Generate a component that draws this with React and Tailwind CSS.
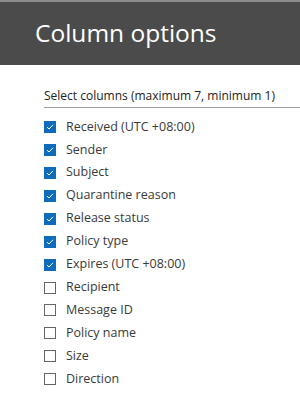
import React, { useState } from 'react';

const columns = [
  { name: 'Received (UTC +08:00)', checked: true },
  { name: 'Sender', checked: true },
  { name: 'Subject', checked: true },
  { name: 'Quarantine reason', checked: true },
  { name: 'Release status', checked: true },
  { name: 'Policy type', checked: true },
  { name: 'Expires (UTC +08:00)', checked: true },
  { name: 'Recipient', checked: false },
  { name: 'Message ID', checked: false },
  { name: 'Policy name', checked: false },
  { name: 'Size', checked: false },
  { name: 'Direction', checked: false },
];

function Checkbox({ checked }) {
  if (checked) {
    return (
      <span className="flex h-[12px] w-[12px] items-center justify-center bg-[#0f6cbd]">
        <svg width="8" height="8" viewBox="0 0 8 8" fill="none">
          <path d="M1 4.2 L3 6 L7 1.8" stroke="white" strokeWidth="1" />
        </svg>
      </span>
    );
  }
  return <span className="h-[12px] w-[12px] border border-[#666]" />;
}

export default function App() {
  const [items, setItems] = useState(columns);

  const toggle = (i) => {
    setItems(items.map((c, idx) => (idx === i ? { ...c, checked: !c.checked } : c)));
  };

  return (
    <div className="h-[400px] w-[300px] bg-white font-['Open_Sans',sans-serif]">
      {/* header */}
      <div className="h-[65px] border-t-2 border-[#8c8c8c] bg-[#4b4b4b] pl-[35px] pt-[15px]">
        <h1 className="text-[24.5px] leading-[32px] text-white">Column options</h1>
      </div>

      <div className="pl-[44px] pt-[22px]">
        <div className="border-b border-[#a0a0a0] pb-[3px] text-[12px] leading-[17px] text-[#222]">
          Select columns (maximum 7, minimum 1)
        </div>

        <ul className="pt-[7.5px]">
          {items.map((c, i) => (
            <li
              key={c.name}
              onClick={() => toggle(i)}
              className="flex h-[22.95px] cursor-pointer items-center gap-[10px] text-[12.5px] text-[#3a3a3a]"
            >
              <Checkbox checked={c.checked} />
              <span>{c.name}</span>
            </li>
          ))}
        </ul>
      </div>
    </div>
  );
}
